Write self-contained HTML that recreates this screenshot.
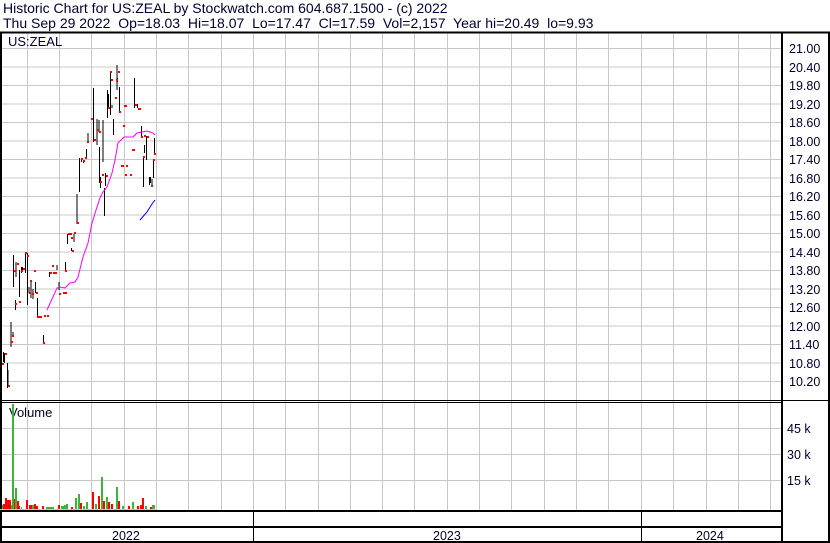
<!DOCTYPE html>
<html><head><style>
html,body{margin:0;padding:0;background:#fff;}
svg{display:block;font-family:"Liberation Sans",Arial,sans-serif;}
</style></head><body>
<svg width="830" height="543" viewBox="0 0 830 543" xmlns="http://www.w3.org/2000/svg">
<rect width="830" height="543" fill="#fff"/>
<text x="3" y="13" font-size="14" fill="#000030" xml:space="preserve" style="white-space:pre">Historic Chart for US:ZEAL by Stockwatch.com 604.687.1500 - (c) 2022</text>
<text x="3" y="28" font-size="14" fill="#000030" xml:space="preserve" style="white-space:pre">Thu Sep 29 2022  Op=18.03  Hi=18.07  Lo=17.47  Cl=17.59  Vol=2,157  Year hi=20.49  lo=9.93</text>
<g stroke="#c8c8c8" stroke-width="1">
<path d="M27.5 33V510M59.5 33V510M91.5 33V510M124.5 33V510M156.5 33V510M188.5 33V510M221.5 33V510M253.5 33V510M285.5 33V510M318.5 33V510M350.5 33V510M382.5 33V510M414.5 33V510M447.5 33V510M479.5 33V510M511.5 33V510M544.5 33V510M576.5 33V510M608.5 33V510M641.5 33V510M673.5 33V510M706.5 33V510M738.5 33V510M770.5 33V510"/>
<path d="M0 48.5H781M0 67H781M0 85.5H781M0 104H781M0 122.5H781M0 141H781M0 159.5H781M0 178H781M0 196.5H781M0 215H781M0 233.5H781M0 252H781M0 270.5H781M0 289H781M0 307.5H781M0 326H781M0 344.5H781M0 363H781M0 381.5H781"/>
<path d="M0 428.5H781M0 454.5H781M0 480.5H781"/>
</g>
<g stroke="#000" fill="none">
<path d="M0 32.5H830" stroke-width="2"/>
<path d="M1 32V543" stroke-width="2"/>
<path d="M782 32V543" stroke-width="2"/>
<path d="M0 400.5H830M0 402.5H782" stroke-width="1"/>
<path d="M0 511H782" stroke-width="2"/>
<path d="M0 527H782" stroke-width="2"/>
<path d="M0 542H830" stroke-width="2"/>
<path d="M829 32V543" stroke-width="2"/>
<path d="M253.5 511V542M641.5 511V542" stroke-width="1"/>
</g>
<text x="8" y="46" font-size="13" fill="#000030">US:ZEAL</text>
<text x="9" y="417" font-size="13" fill="#000030">Volume</text>
<g font-size="12.5" fill="#000030">
<text x="789" y="53">21.00</text><text x="789" y="72">20.40</text><text x="789" y="90">19.80</text><text x="789" y="109">19.20</text><text x="789" y="127">18.60</text><text x="789" y="146">18.00</text><text x="789" y="164">17.40</text><text x="789" y="183">16.80</text><text x="789" y="201">16.20</text><text x="789" y="220">15.60</text><text x="789" y="238">15.00</text><text x="789" y="257">14.40</text><text x="789" y="275">13.80</text><text x="789" y="294">13.20</text><text x="789" y="312">12.60</text><text x="789" y="331">12.00</text><text x="789" y="349">11.40</text><text x="789" y="368">10.80</text><text x="789" y="386">10.20</text>
<text x="787" y="433">45 k</text><text x="787" y="459">30 k</text><text x="787" y="485">15 k</text>
<text x="112" y="540">2022</text><text x="433" y="540">2023</text><text x="696" y="540">2024</text>
</g>
<g stroke="#000" stroke-width="1">
<path d="M3.5 352V362M4.5 353V363M7.5 363V388M8 370V385M11 322V347M13 332V337M13.5 255V287M16 262V277M15.5 300V310M19.5 270V297M21.5 267V273M22.5 267V270M25.5 252V273M27.5 253V305M29 287V293M31 280V298M33 289V299M35.5 282V293M37.5 298V317M43.5 335V343M49.5 272V277M57 265V270M59 282V290M65.5 262V270M67.5 234V244M71.5 248V251M74 234V242M77 194V224M79.5 158V192M81.5 158V162M83.5 160V163M86.5 149V157M88 133V142M93.5 88V142M97 119V145M99 120V132M99.5 147V183M100.5 177V188M103 120V162M105.5 173V186M104.5 188V216M107.5 90V118M108.5 94V108M110.5 72V115M112 105V108M113.5 119V135M117 65V90M117.5 78V82M119.5 87V113M134.5 78V108M137.5 104V108M141.5 126V137M143.5 157V187M144.5 145V153M146.5 136V160M149.5 177V185M150.5 177V183M152 179V187M153.5 160V178M154.5 138V153"/>
</g>
<g fill="#f00">
<rect x="2" y="363" width="2" height="2"/><rect x="5" y="353" width="2" height="2"/><rect x="8" y="385" width="2" height="2"/><rect x="11" y="341" width="2" height="2"/><rect x="12" y="335" width="2" height="2"/><rect x="14" y="270" width="2" height="2"/><rect x="15" y="303" width="2" height="2"/><rect x="17" y="263" width="2" height="2"/><rect x="19" y="301" width="2" height="2"/><rect x="21" y="270" width="2" height="2"/><rect x="23" y="268" width="2" height="2"/><rect x="25" y="252" width="2" height="2"/><rect x="27" y="255" width="2" height="2"/><rect x="29" y="292" width="2" height="2"/><rect x="30" y="280" width="2" height="2"/><rect x="32" y="293" width="2" height="2"/><rect x="34" y="270" width="2" height="2"/><rect x="36" y="292" width="2" height="2"/><rect x="37" y="316" width="5" height="2"/><rect x="44" y="315" width="2" height="2"/><rect x="47" y="315" width="2" height="2"/><rect x="43" y="342" width="2" height="2"/><rect x="52" y="265" width="2" height="2"/><rect x="50" y="272" width="2" height="2"/><rect x="53" y="272" width="4" height="2"/><rect x="59" y="293" width="2" height="2"/><rect x="63" y="292" width="4" height="2"/><rect x="65" y="270" width="2" height="2"/><rect x="68" y="233" width="4" height="2"/><rect x="71" y="237" width="2" height="2"/><rect x="74" y="232" width="2" height="2"/><rect x="72" y="250" width="2" height="2"/><rect x="77" y="222" width="2" height="2"/><rect x="81" y="158" width="2" height="2"/><rect x="85" y="157" width="2" height="2"/><rect x="83" y="160" width="2" height="2"/><rect x="87" y="141" width="2" height="2"/><rect x="91" y="118" width="2" height="2"/><rect x="94" y="139" width="2" height="2"/><rect x="97" y="129" width="2" height="2"/><rect x="99" y="131" width="2" height="2"/><rect x="100" y="181" width="2" height="2"/><rect x="102" y="174" width="2" height="2"/><rect x="106" y="175" width="2" height="2"/><rect x="108" y="107" width="2" height="2"/><rect x="110" y="71" width="2" height="2"/><rect x="111" y="79" width="2" height="2"/><rect x="115" y="97" width="2" height="2"/><rect x="116" y="79" width="2" height="2"/><rect x="118" y="71" width="2" height="2"/><rect x="119" y="111" width="2" height="2"/><rect x="123" y="125" width="2" height="2"/><rect x="135" y="104" width="2" height="2"/><rect x="138" y="108" width="3" height="2"/><rect x="132" y="149" width="3" height="2"/><rect x="121" y="165" width="3" height="2"/><rect x="126" y="165" width="2" height="2"/><rect x="125" y="174" width="2" height="2"/><rect x="130" y="174" width="2" height="2"/><rect x="141" y="136" width="2" height="2"/><rect x="143" y="156" width="2" height="2"/><rect x="144" y="135" width="2" height="2"/><rect x="147" y="136" width="2" height="2"/><rect x="151" y="185" width="2" height="2"/><rect x="153" y="159" width="2" height="2"/><rect x="154" y="153" width="2" height="2"/><rect x="124" y="105" width="3" height="2"/>
</g>
<polyline fill="none" stroke="#f0f" stroke-width="1" points="47,310 57,288 60,287 65,288 70,283 75,282 78,277 83,257 88,243 92,223 97,207 100,198 103,192 107,187 112,173 115,160 118,143 124,137 133,137 137,133 142,132 147,131 150,132 153,133 155,135"/>
<polyline fill="none" stroke="#00f" stroke-width="1" points="140,220 147,212 152,204 155,200"/>
<g fill="#f00">
<rect x="3" y="504" width="2" height="5"/><rect x="5" y="498" width="2" height="11"/><rect x="7" y="500" width="2" height="9"/><rect x="9" y="500" width="2" height="9"/><rect x="14" y="499" width="1" height="10"/><rect x="17" y="501" width="2" height="8"/><rect x="19" y="506" width="1" height="3"/><rect x="26" y="500" width="2" height="9"/><rect x="29" y="505" width="2" height="4"/><rect x="31" y="505" width="2" height="4"/><rect x="34" y="504" width="2" height="5"/><rect x="36" y="506" width="2" height="3"/><rect x="42" y="506" width="2" height="3"/><rect x="58" y="505" width="2" height="4"/><rect x="71" y="507" width="2" height="2"/><rect x="80" y="503" width="2" height="6"/><rect x="92" y="492" width="2" height="17"/><rect x="98" y="496" width="2" height="13"/><rect x="103" y="501" width="2" height="8"/><rect x="108" y="502" width="2" height="7"/><rect x="111" y="504" width="2" height="5"/><rect x="118" y="501" width="2" height="8"/><rect x="128" y="506" width="2" height="3"/><rect x="137" y="506" width="2" height="3"/><rect x="140" y="505" width="2" height="4"/><rect x="142" y="498" width="2" height="11"/><rect x="150" y="507" width="2" height="2"/>
</g>
<g fill="#3cb43c">
<rect x="2" y="505" width="1" height="4"/><rect x="11" y="505" width="1" height="4"/><rect x="12" y="404" width="2" height="105"/><rect x="15" y="488" width="2" height="21"/><rect x="21" y="507" width="1" height="2"/><rect x="32" y="505" width="2" height="4"/><rect x="46" y="507" width="8" height="2"/><rect x="61" y="506" width="3" height="3"/><rect x="64" y="505" width="2" height="4"/><rect x="66" y="504" width="2" height="5"/><rect x="75" y="498" width="2" height="11"/><rect x="78" y="494" width="2" height="15"/><rect x="83" y="506" width="2" height="3"/><rect x="86" y="502" width="2" height="7"/><rect x="95" y="504" width="2" height="5"/><rect x="101" y="477" width="2" height="32"/><rect x="106" y="497" width="2" height="12"/><rect x="116" y="487" width="2" height="22"/><rect x="122" y="506" width="2" height="3"/><rect x="132" y="502" width="2" height="7"/><rect x="145" y="506" width="2" height="3"/><rect x="152" y="505" width="3" height="4"/>
</g>
<path d="M0 509.5H156" stroke="#c8c8c8" stroke-width="1"/>
</svg>
</body></html>
